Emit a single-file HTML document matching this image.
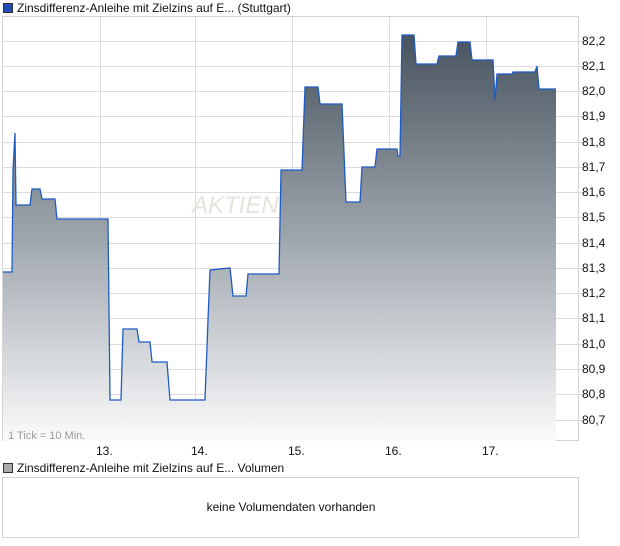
<!DOCTYPE html>
<html><head><meta charset="utf-8"><style>
body{margin:0;width:620px;height:546px;background:#fff;font-family:"Liberation Sans",sans-serif;overflow:hidden;position:relative}
.t{position:absolute;font-size:12px;color:#111;white-space:nowrap}
</style></head><body>
<div class="t" style="left:3px;top:1px"><span style="display:inline-block;width:8px;height:8px;background:#1f4fb0;border:1px solid #333;margin-right:4px;vertical-align:-1px"></span>Zinsdifferenz-Anleihe mit Zielzins auf E... (Stuttgart)</div>
<svg width="620" height="460" style="position:absolute;left:0;top:0">
<defs><linearGradient id="g" x1="0" y1="35" x2="0" y2="441" gradientUnits="userSpaceOnUse"><stop offset="0" stop-color="#47535e"/><stop offset="0.5" stop-color="#9ea6ad"/><stop offset="1" stop-color="#fbfbfc"/></linearGradient></defs>
<g stroke="#dcdcdc" stroke-width="1">
<line x1="2" y1="41.5" x2="586" y2="41.5"/><line x1="2" y1="66.5" x2="586" y2="66.5"/><line x1="2" y1="91.5" x2="586" y2="91.5"/><line x1="2" y1="116.5" x2="586" y2="116.5"/><line x1="2" y1="142.5" x2="586" y2="142.5"/><line x1="2" y1="167.5" x2="586" y2="167.5"/><line x1="2" y1="192.5" x2="586" y2="192.5"/><line x1="2" y1="217.5" x2="586" y2="217.5"/><line x1="2" y1="243.5" x2="586" y2="243.5"/><line x1="2" y1="268.5" x2="586" y2="268.5"/><line x1="2" y1="293.5" x2="586" y2="293.5"/><line x1="2" y1="318.5" x2="586" y2="318.5"/><line x1="2" y1="344.5" x2="586" y2="344.5"/><line x1="2" y1="369.5" x2="586" y2="369.5"/><line x1="2" y1="394.5" x2="586" y2="394.5"/><line x1="2" y1="420.5" x2="586" y2="420.5"/>
<line x1="100.5" y1="16" x2="100.5" y2="441"/><line x1="195.5" y1="16" x2="195.5" y2="441"/><line x1="292.5" y1="16" x2="292.5" y2="441"/><line x1="389.5" y1="16" x2="389.5" y2="441"/><line x1="486.5" y1="16" x2="486.5" y2="441"/>
</g>
<rect x="2.5" y="16.5" width="576" height="424" fill="none" stroke="#d4d4d4"/>
<text x="192" y="213" font-size="24" fill="#e8e2dc" font-family="Liberation Sans" font-style="italic">AKTIEN</text>
<path d="M3 441 L3 272 L12 272 L13 170 L15 133 L16 205 L30 205 L32 189 L40 189 L42 199 L55 199 L57 219 L108 219 L110 400 L121 400 L123 329 L137 329 L139 342 L150 342 L152 362 L167 362 L170 400 L205 400 L208 320 L210 270 L230 268 L233 296 L246 296 L248 274 L279 274 L281 170 L302 170 L305 87 L318 87 L320 104 L342 104 L346 202 L360 202 L362 167 L375 167 L377 149 L397 149 L398 156 L400 156 L402 35 L414 35 L416 64 L437 64 L439 56 L456 56 L458 42 L470 42 L472 60 L493 60 L495 100 L497 74 L512 74 L513 72 L535 72 L537 66 L539 89 L556 89 L556 441 Z" fill="url(#g)"/>
<path d="M3 272 L12 272 L13 170 L15 133 L16 205 L30 205 L32 189 L40 189 L42 199 L55 199 L57 219 L108 219 L110 400 L121 400 L123 329 L137 329 L139 342 L150 342 L152 362 L167 362 L170 400 L205 400 L208 320 L210 270 L230 268 L233 296 L246 296 L248 274 L279 274 L281 170 L302 170 L305 87 L318 87 L320 104 L342 104 L346 202 L360 202 L362 167 L375 167 L377 149 L397 149 L398 156 L400 156 L402 35 L414 35 L416 64 L437 64 L439 56 L456 56 L458 42 L470 42 L472 60 L493 60 L495 100 L497 74 L512 74 L513 72 L535 72 L537 66 L539 89 L556 89" fill="none" stroke="#1f5bc4" stroke-width="1.3"/>
<g font-size="12" fill="#111" font-family="Liberation Sans">
<text x="582" y="45">82,2</text><text x="582" y="70">82,1</text><text x="582" y="95">82,0</text><text x="582" y="120">81,9</text><text x="582" y="146">81,8</text><text x="582" y="171">81,7</text><text x="582" y="196">81,6</text><text x="582" y="221">81,5</text><text x="582" y="247">81,4</text><text x="582" y="272">81,3</text><text x="582" y="297">81,2</text><text x="582" y="322">81,1</text><text x="582" y="348">81,0</text><text x="582" y="373">80,9</text><text x="582" y="398">80,8</text><text x="582" y="424">80,7</text>
<text x="96" y="455">13.</text><text x="191" y="455">14.</text><text x="288" y="455">15.</text><text x="385" y="455">16.</text><text x="482" y="455">17.</text>
</g>
<text x="8" y="439" font-size="11" fill="#9a9a9a" font-family="Liberation Sans">1 Tick = 10 Min.</text>
</svg>
<div class="t" style="left:3px;top:461px"><span style="display:inline-block;width:8px;height:8px;background:#aaa;border:1px solid #333;margin-right:4px;vertical-align:-1px"></span>Zinsdifferenz-Anleihe mit Zielzins auf E... Volumen</div>
<div style="position:absolute;left:2px;top:477px;width:575px;height:59px;border:1px solid #d4d4d4"></div>
<div class="t" style="left:0;width:582px;text-align:center;top:500px">keine Volumendaten vorhanden</div>
</body></html>
